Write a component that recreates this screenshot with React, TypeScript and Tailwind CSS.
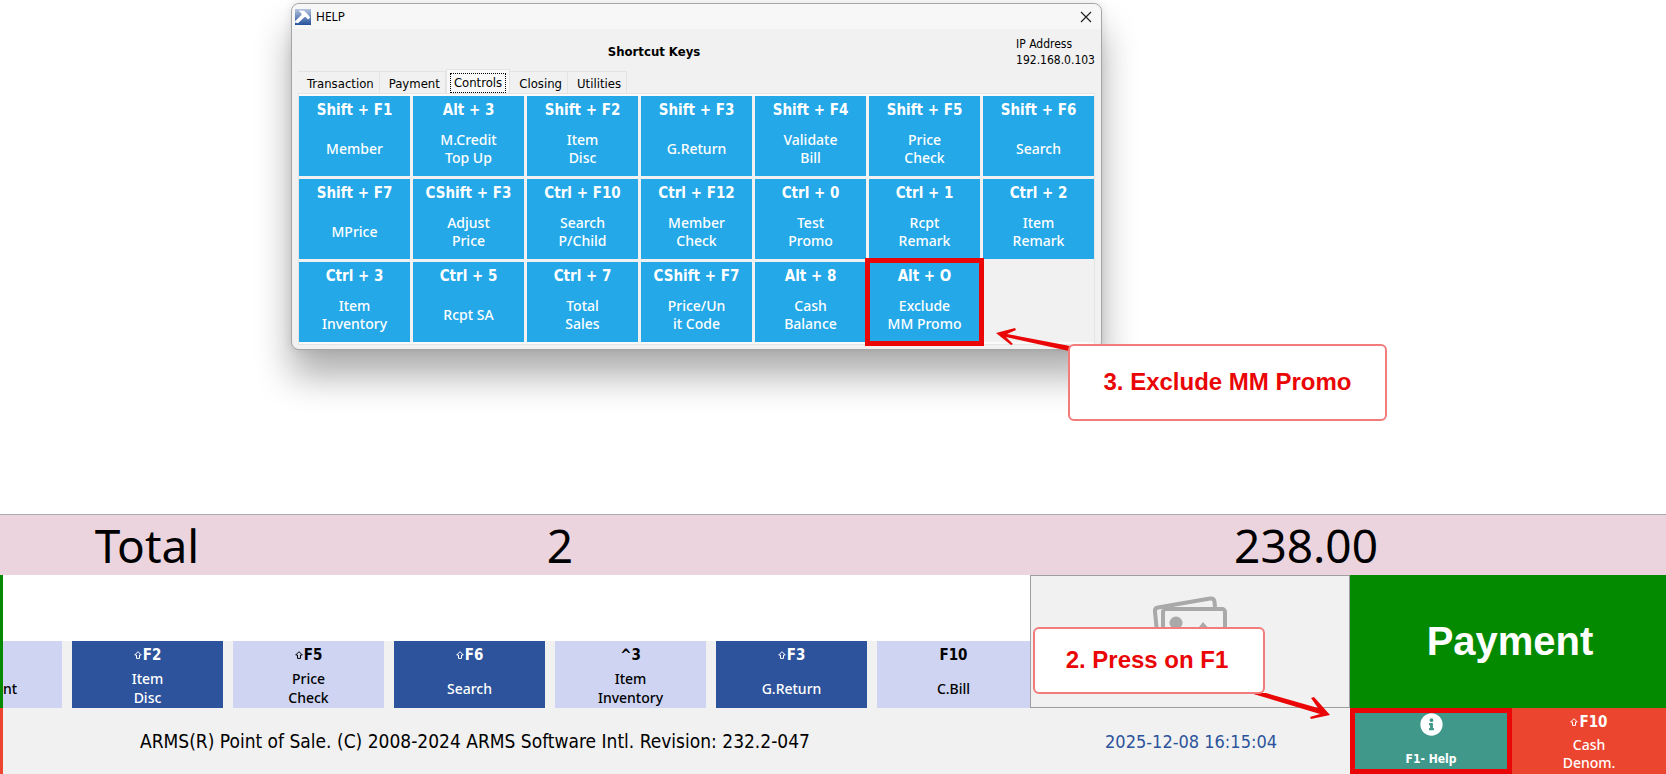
import { Fragment } from 'react';
import { FaInfoCircle } from 'react-icons/fa';

interface Shortcut {
  keys: string;
  label: string[];
  shift?: boolean;
  highlighted?: boolean;
}

const tabs = ['Transaction', 'Payment', 'Controls', 'Closing', 'Utilities'];

const shortcuts: Shortcut[] = [
  { keys: 'Shift + F1', label: ['Member'] },
  { keys: 'Alt + 3', label: ['M.Credit', 'Top Up'] },
  { keys: 'Shift + F2', label: ['Item', 'Disc'] },
  { keys: 'Shift + F3', label: ['G.Return'] },
  { keys: 'Shift + F4', label: ['Validate', 'Bill'] },
  { keys: 'Shift + F5', label: ['Price', 'Check'] },
  { keys: 'Shift + F6', label: ['Search'] },
  { keys: 'Shift + F7', label: ['MPrice'] },
  { keys: 'CShift + F3', label: ['Adjust', 'Price'] },
  { keys: 'Ctrl + F10', label: ['Search', 'P/Child'] },
  { keys: 'Ctrl + F12', label: ['Member', 'Check'] },
  { keys: 'Ctrl + 0', label: ['Test', 'Promo'] },
  { keys: 'Ctrl + 1', label: ['Rcpt', 'Remark'] },
  { keys: 'Ctrl + 2', label: ['Item', 'Remark'] },
  { keys: 'Ctrl + 3', label: ['Item', 'Inventory'] },
  { keys: 'Ctrl + 5', label: ['Rcpt SA'] },
  { keys: 'Ctrl + 7', label: ['Total', 'Sales'] },
  { keys: 'CShift + F7', label: ['Price/Un', 'it Code'] },
  { keys: 'Alt + 8', label: ['Cash', 'Balance'] },
  { keys: 'Alt + O', label: ['Exclude', 'MM Promo'], highlighted: true },
];

const quickKeys: Shortcut[] = [
  { keys: 'F2', label: ['Item', 'Disc'], shift: true },
  { keys: 'F5', label: ['Price', 'Check'], shift: true },
  { keys: 'F6', label: ['Search'], shift: true },
  { keys: '^3', label: ['Item', 'Inventory'] },
  { keys: 'F3', label: ['G.Return'], shift: true },
  { keys: 'F10', label: ['C.Bill'] },
];

function Lines({ lines }: { lines: string[] }) {
  return (
    <>
      {lines.map((line, index) => (
        <Fragment key={line}>
          {index > 0 && <br />}
          {line}
        </Fragment>
      ))}
    </>
  );
}

function KeyName({ name, shift }: { name: string; shift?: boolean }) {
  return (
    <span className="flex h-7 items-center justify-center font-['DejaVu_Sans_Condensed','DejaVu_Sans',sans-serif] text-[15px] font-bold">
      {shift && (
        <svg viewBox="0 0 8 8" className="mr-px h-2 w-2" fill="none" stroke="currentColor" aria-hidden="true">
          <path d="M4 .7 7.300 4H5.500v3.400h-3V4H.7Z" />
        </svg>
      )}
      {name}
    </span>
  );
}

function AppIcon() {
  return (
    <svg viewBox="0 0 16 16" className="h-4 w-4" aria-hidden="true">
      <defs>
        <linearGradient id="app-icon" x1="0" y1="0" x2="0" y2="1">
          <stop offset="0" stopColor="#b4c4de" />
          <stop offset="1" stopColor="#24509c" />
        </linearGradient>
      </defs>
      <rect width="16" height="16" fill="url(#app-icon)" />
      <path d="M3.500 1.500 9 1.800l3.500 3.200 2.700 3.500-2.200 2-2-2.300-1.500-.2L3 14.200l-3-.7v-1.200L6.500 6 6.300 4.300Z" fill="#fff" />
    </svg>
  );
}

function PicturesIcon() {
  return (
    <svg viewBox="0 0 74 62" className="h-[62px] w-[74px]" fill="none" stroke="#a9a9a9" strokeWidth="4" aria-hidden="true">
      <path d="M6 56 2 16q-.5-4 3-4.500L57 2.500q4-.5 4.500 3L62 11" />
      <rect x="10" y="13" width="62" height="47" rx="3" />
      <circle cx="23" cy="27" r="6.500" fill="#a9a9a9" stroke="none" />
      <path d="m14 56 14-18 7 7 15-19 19 21v9Z" fill="#a9a9a9" stroke="none" />
    </svg>
  );
}

function HelpDialog() {
  return (
    <section
      aria-label="Help"
      className="relative mt-[3px] ml-[291px] w-full max-w-[811px] rounded-lg border border-[#a6a6a6] bg-[#f1f1f1] text-black shadow-[0_26px_36px_0_rgba(0,0,0,0.32),0_0_10px_0_rgba(0,0,0,0.1)]"
    >
      <header className="flex h-[25px] items-center justify-between rounded-t-lg bg-[#f7f7f7] pr-[7px] pl-[3px]">
        <div className="flex items-center gap-[5px]">
          <AppIcon />
          <h1 className="font-['Noto_Sans',sans-serif] text-xs">HELP</h1>
        </div>
        <button type="button" aria-label="Close" className="flex h-4 w-4 items-center justify-center">
          <svg viewBox="0 0 12 12" className="h-3 w-3" stroke="#222" strokeWidth="1.200" aria-hidden="true">
            <path d="m1 1 10 10M11 1 1 11" />
          </svg>
        </button>
      </header>

      <div className="flex h-10 pr-[6px]">
        <h2 className="mt-[15px] flex-1 text-center text-[13px] leading-4 font-bold">Shortcut Keys</h2>
        <p className="mt-[7px] text-xs leading-4">
          IP Address
          <br />
          192.168.0.103
        </p>
      </div>

      <div role="tablist" className="flex items-end px-[6px] text-[13px]">
        {tabs.map((tab) => (
          <button
            key={tab}
            type="button"
            role="tab"
            aria-selected={tab === 'Controls'}
            className={
              tab === 'Controls'
                ? 'h-6 border border-b-0 border-[#e4e4e4] bg-[#f9f9f9] p-[3px] leading-[18px]'
                : 'h-[22px] border-t border-r border-[#e4e4e4] pt-[2px] pr-[5px] pl-[9px]'
            }
          >
            {tab === 'Controls' ? <span className="block border border-dotted border-black px-[3px]">{tab}</span> : tab}
          </button>
        ))}
      </div>

      <div className="mx-[6px] mb-1 border border-[#e4e4e4] bg-[#fafafa] pt-[2px] pb-[2px]">
        <div role="tabpanel" className="grid grid-cols-7 gap-[3px] bg-[#f1f1f1]">
          {shortcuts.map((item) => (
            <button
              key={item.keys}
              type="button"
              className={`flex h-20 flex-col bg-[#24a8e8] pb-[2px] text-white ${item.highlighted ? 'outline-5 -outline-offset-1 outline-[#ea0606]' : ''}`}
            >
              <span className="block w-full">
                <KeyName name={item.keys} />
              </span>
              <span className="flex w-full flex-1 items-center justify-center font-['Noto_Sans','Open_Sans',sans-serif] text-sm leading-[18px] font-medium">
                <span>
                  <Lines lines={item.label} />
                </span>
              </span>
            </button>
          ))}
        </div>
      </div>

      <svg viewBox="0 0 80 24" className="absolute top-[324px] left-[703px] h-6 w-20" aria-hidden="true">
        <path d="M1 5 20 0l1 2-9 4 63 12-1 5L11 9l7 7-2 1Z" fill="#ea0606" />
      </svg>
      <p className="absolute top-[340px] left-[776px] flex h-[77px] w-[319px] items-center justify-center rounded-md border-2 border-[#f27b7b] bg-white pb-[2px] font-['Liberation_Sans',Arial,sans-serif] text-2xl font-bold text-[#ea0606]">
        3. Exclude MM Promo
      </p>
    </section>
  );
}

function PointOfSale() {
  return (
    <section aria-label="Point of sale" className="mt-auto bg-[#f1f1f1] font-['Noto_Sans',sans-serif]">
      <div className="flex h-[61px] items-center border-t border-[#ababab] bg-[#ecd4de] text-[46px] text-black">
        <span className="w-[294px] text-center">Total</span>
        <span className="w-[532px] text-center">2</span>
        <span className="flex-1 pr-[288px] text-right">238.00</span>
      </div>

      <div className="flex h-[133px]">
        <div className="w-[3px] bg-[#038a00]" />
        <div className="flex min-w-0 flex-1 flex-col">
          <div className="h-[66px] shrink-0 bg-white" />
          <div className="flex flex-1 gap-[10px]">
            <button type="button" className="flex w-[59px] items-center bg-[#ced4f2] pt-7 text-sm font-medium">
              nt
            </button>
            {quickKeys.map((item, index) => (
              <button
                key={item.keys}
                type="button"
                className={`flex w-[151px] flex-col pb-px last:flex-1 ${index % 2 === 0 ? 'bg-[#2c539b] text-white' : 'bg-[#ced4f2] text-black'}`}
              >
                <span className="block w-full">
                  <KeyName name={item.keys} shift={item.shift} />
                </span>
                <span className="flex w-full flex-1 items-center justify-center text-sm leading-[19px] font-medium">
                  <span>
                    <Lines lines={item.label} />
                  </span>
                </span>
              </button>
            ))}
          </div>
        </div>

        <div className="relative flex w-[320px] justify-center border border-[#9f9f9f] pt-5">
          <PicturesIcon />
          <svg viewBox="0 0 82 28" className="absolute top-[115px] left-[219px] h-7 w-[82px]" aria-hidden="true">
            <path d="M0 2h16l52 15-7-10 3-1 16 18-19 4-1-2 10-3Z" fill="#ea0606" />
          </svg>
          <p className="absolute top-[51px] left-[2px] flex h-[67px] w-[232px] items-center justify-center rounded-md border-2 border-[#f27b7b] bg-white pr-1 pb-[2px] font-['Liberation_Sans',Arial,sans-serif] text-2xl font-bold text-[#ea0606]">
            2. Press on F1
          </p>
        </div>

        <button
          type="button"
          className="w-[316px] bg-[#038a00] pb-[2px] pl-1 font-['Liberation_Sans',Arial,sans-serif] text-[40px] font-bold text-white"
        >
          Payment
        </button>
      </div>

      <footer className="flex h-[66px] items-center font-['DejaVu_Sans_Condensed','DejaVu_Sans',sans-serif]">
        <div className="h-full w-[3px] bg-[#ef4530]" />
        <p className="flex-1 pl-[137px] text-[19px] text-black">
          ARMS(R) Point of Sale. (C) 2008-2024 ARMS Software Intl. Revision: 232.2-047
        </p>
        <time className="pr-[73px] text-[18px] text-[#2c539b]">2025-12-08 16:15:04</time>
        <button
          type="button"
          className="flex h-full w-[162px] flex-col items-center justify-between border-5 border-[#ea0606] bg-[#40988b] pb-[2px] text-white"
        >
          <FaInfoCircle className="h-[23px] w-[23px]" />
          <span className="text-xs leading-4 font-bold">F1- Help</span>
        </button>
        <button type="button" className="flex h-full w-[154px] flex-col bg-[#ec452f] text-white">
          <span className="block w-full">
            <KeyName name="F10" shift />
          </span>
          <span className="w-full font-['Noto_Sans',sans-serif] text-sm leading-[18px] font-medium">
            <Lines lines={['Cash', 'Denom.']} />
          </span>
        </button>
      </footer>
    </section>
  );
}

export default function App() {
  return (
    <main className="flex min-h-screen flex-col overflow-x-hidden bg-white font-['DejaVu_Sans_Condensed','DejaVu_Sans',sans-serif]">
      <HelpDialog />
      <PointOfSale />
    </main>
  );
}
